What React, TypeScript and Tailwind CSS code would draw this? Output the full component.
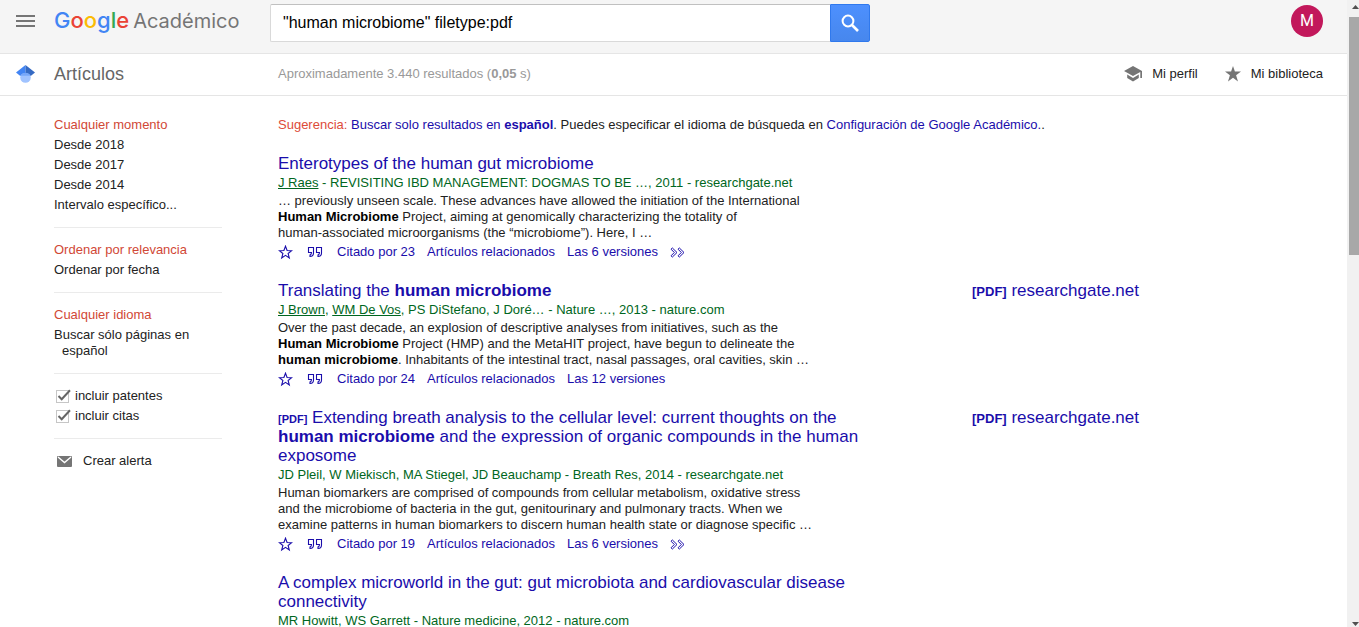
import type { ReactNode } from "react";

const link = "text-[#1a0dab] hover:underline";

type Result = {
  tag?: string;
  title: ReactNode;
  authors: ReactNode;
  snippet?: ReactNode;
  cited?: number;
  versions?: number;
  more?: boolean;
  pdf?: string;
};

const results: Result[] = [
  {
    title: "Enterotypes of the human gut microbiome",
    authors: (
      <>
        <a href="#" className="underline">J Raes</a> - REVISITING IBD MANAGEMENT: DOGMAS TO BE …, 2011 - researchgate.net
      </>
    ),
    snippet: (
      <>
        … previously unseen scale. These advances have allowed the initiation of the International
        <br />
        <b className="text-black">Human Microbiome</b> Project, aiming at genomically characterizing the totality of
        <br />
        human-associated microorganisms (the “microbiome”). Here, I …
      </>
    ),
    cited: 23,
    versions: 6,
    more: true,
  },
  {
    title: (
      <>
        Translating the <b>human microbiome</b>
      </>
    ),
    authors: (
      <>
        <a href="#" className="underline">J Brown</a>, <a href="#" className="underline">WM De Vos</a>, PS DiStefano, J Doré… - Nature …, 2013 - nature.com
      </>
    ),
    snippet: (
      <>
        Over the past decade, an explosion of descriptive analyses from initiatives, such as the
        <br />
        <b className="text-black">Human Microbiome</b> Project (HMP) and the MetaHIT project, have begun to delineate the
        <br />
        <b className="text-black">human microbiome</b>. Inhabitants of the intestinal tract, nasal passages, oral cavities, skin …
      </>
    ),
    cited: 24,
    versions: 12,
    pdf: "researchgate.net",
  },
  {
    tag: "[PDF]",
    title: (
      <>
        Extending breath analysis to the cellular level: current thoughts on the <b>human microbiome</b> and the
        expression of organic compounds in the human exposome
      </>
    ),
    authors: "JD Pleil, W Miekisch, MA Stiegel, JD Beauchamp - Breath Res, 2014 - researchgate.net",
    snippet: (
      <>
        Human biomarkers are comprised of compounds from cellular metabolism, oxidative stress
        <br />
        and the microbiome of bacteria in the gut, genitourinary and pulmonary tracts. When we
        <br />
        examine patterns in human biomarkers to discern human health state or diagnose specific …
      </>
    ),
    cited: 19,
    versions: 6,
    more: true,
    pdf: "researchgate.net",
  },
  {
    title: "A complex microworld in the gut: gut microbiota and cardiovascular disease connectivity",
    authors: "MR Howitt, WS Garrett - Nature medicine, 2012 - nature.com",
  },
];

function StarOutline() {
  return (
    <svg width="15" height="15" viewBox="0 0 15 15" fill="none" stroke="#1a0dab" strokeWidth="1.1">
      <path d="M7.5 1.2l1.6 4.3 4.5.2-3.5 2.8 1.2 4.4-3.8-2.5-3.8 2.5 1.2-4.4L1.4 5.7l4.5-.2z" />
    </svg>
  );
}

function QuoteIcon() {
  return (
    <svg width="16" height="12" viewBox="0 0 16 12" fill="none" stroke="#1a0dab" strokeWidth="1.1">
      <path d="M1.5 1.5h5V7c0 2-1.5 3.5-3.5 3.5V9c1-.3 1.500-1.200 1.500-2.500h-3zM9.500 1.500h5V7c0 2-1.500 3.500-3.500 3.500V9c1-.3 1.500-1.200 1.500-2.500h-3z" />
    </svg>
  );
}

function MoreIcon() {
  return (
    <svg width="15" height="11" viewBox="0 0 15 11" fill="none" stroke="#1a0dab" strokeWidth="1">
      <path d="M1 2.2L2.4 1 7 5.5 2.4 10 1 8.8l3.3-3.3zM8 2.2L9.4 1 14 5.5 9.4 10 8 8.8l3.3-3.3z" />
    </svg>
  );
}

function ResultItem({ r }: { r: Result }) {
  return (
    <article className="mb-5 flex items-start">
      <div className="w-[600px] shrink-0">
        <h3 className="text-[17px] leading-[19px]">
          {r.tag && (
            <>
              <span className="text-[11px] font-bold leading-none text-[#1a0dab]">{r.tag}</span>{" "}
            </>
          )}
          <a href="#" className={link}>{r.title}</a>
        </h3>
        <div className="mt-px leading-[18px] text-[#006621]">{r.authors}</div>
        {r.snippet && <p className="mt-px leading-4">{r.snippet}</p>}
        {r.cited && (
          <div className="mt-0.5 flex h-[18px] items-center leading-[18px] text-[#1a0dab]">
            <button type="button" aria-label="Guardar" className="mr-3.5"><StarOutline /></button>
            <button type="button" aria-label="Citar" className="mr-3.5"><QuoteIcon /></button>
            <a href="#" className="mr-3">Citado por {r.cited}</a>
            <a href="#" className="mr-3">Artículos relacionados</a>
            <a href="#" className="mr-3">Las {r.versions} versiones</a>
            {r.more && <button type="button" aria-label="Más"><MoreIcon /></button>}
          </div>
        )}
      </div>
      {r.pdf && (
        <a href="#" className={`${link} ml-[94px] whitespace-nowrap text-[17px] leading-[19px]`}>
          <span className="text-[13px] font-bold leading-none">[PDF]</span> {r.pdf}
        </a>
      )}
    </article>
  );
}

function Group({ children, last }: { children: ReactNode; last?: boolean }) {
  return <div className={last ? "" : "mb-3 border-b border-[#ebebeb] pb-3"}>{children}</div>;
}

function Item({ children, active }: { children: ReactNode; active?: boolean }) {
  return (
    <a href="#" className={`block py-0.5 pl-2 -indent-2 leading-4 ${active ? "text-[#d14836]" : "text-[#222]"}`}>
      {children}
    </a>
  );
}

function Check({ label }: { label: string }) {
  return (
    <label className="flex h-5 items-center gap-1 pl-0.5">
      <span className="relative size-[15px]">
        <input
          type="checkbox"
          defaultChecked
          className="peer absolute top-px left-0 size-[13px] appearance-none border border-[#c6c6c6] bg-white"
        />
        <svg className="pointer-events-none absolute inset-0 hidden peer-checked:block" width="15" height="15" viewBox="0 0 15 15" fill="none" stroke="#666" strokeWidth="2">
          <path d="M2.5 7l3.2 3.2L14 1.3" />
        </svg>
      </span>
      {label}
    </label>
  );
}

function Header() {
  return (
    <header className="flex h-[54px] border-b border-[#e5e5e5] bg-[#f5f5f5]">
      <div className="flex w-[270px] shrink-0 items-start pl-4">
        <button type="button" aria-label="Menú" className="mt-[15px] mr-[19px]">
          <svg width="19" height="12" viewBox="0 0 19 12" fill="#757575">
            <path d="M0 0h19v2H0zM0 5h19v2H0zM0 10h19v2H0z" />
          </svg>
        </button>
        <a href="#" className="flex items-baseline gap-1 whitespace-nowrap font-['Inter',sans-serif] leading-[40px]">
          <span className="text-[22px] font-medium">
            <span className="text-[#4285f4]">G</span>
            <span className="text-[#ea4335]">o</span>
            <span className="text-[#fbbc05]">o</span>
            <span className="text-[#4285f4]">g</span>
            <span className="text-[#34a853]">l</span>
            <span className="text-[#ea4335]">e</span>
          </span>
          <span className="text-xl leading-[40px] text-[#757575]">Académico</span>
        </a>
      </div>
      <form className="mt-1 flex h-[38px] w-[600px]" onSubmit={(e) => e.preventDefault()}>
        <input
          type="text"
          aria-label="Buscar"
          defaultValue={'"human microbiome" filetype:pdf'}
          className="min-w-0 flex-1 rounded-l-xs border border-r-0 border-[#d9d9d9] border-t-[#c0c0c0] bg-white px-3 text-base text-black outline-none"
        />
        <button
          type="submit"
          aria-label="Buscar"
          className="flex w-10 items-center justify-center rounded-r-xs border border-[#3079ed] bg-linear-to-b from-[#4d90fe] to-[#4787ed]"
        >
          <svg width="18" height="18" viewBox="0 0 18 18" fill="none" stroke="#fff">
            <circle cx="7" cy="7" r="5.4" strokeWidth="2" />
            <path d="M11 11l6 6" strokeWidth="2.6" />
          </svg>
        </button>
      </form>
      <button
        type="button"
        aria-label="Cuenta"
        className="mt-[5px] mr-6 ml-auto flex size-8 items-center justify-center rounded-full bg-[#c2185b] font-['Roboto',sans-serif] text-base text-white"
      >
        M
      </button>
    </header>
  );
}

function SubHeader() {
  return (
    <div className="flex h-[42px] items-center border-b border-[#e5e5e5] pr-6 pb-0.5">
      <div className="flex w-[278px] shrink-0 items-center pl-4">
        <svg width="19" height="18" viewBox="0 0 19 18" className="mr-[19px]">
          <circle cx="9.5" cy="12.5" r="5.3" fill="#a0c3ff" />
          <path d="M9.5 0L0 7.5l4.3 3.4a5.9 5.9 0 0 1 5.2-3z" fill="#4285f4" />
          <path d="M9.5 0L19 7.5l-4.3 3.4a5.9 5.9 0 0 0-5.2-3z" fill="#356ac3" />
          <path d="M4.4 10.8a5.9 5.9 0 0 1 10.2 0z" fill="#76a7fa" />
        </svg>
        <h1 className="text-lg leading-6 text-[#666]">Artículos</h1>
      </div>
      <div className="text-[#999]">
        Aproximadamente 3.440 resultados (<b>0,05</b> s)
      </div>
      <nav className="ml-auto flex items-center gap-[27px]">
        <a href="#" className="flex items-center gap-2.5">
          <svg width="18" height="16" viewBox="0 0 18 16" fill="#757575">
            <path d="M9 0L0 5l9 5 7.3-4.1V12H18V5z" />
            <path d="M3.2 8.6v3.3L9 15.4l5.8-3.5V8.6L9 11.9z" />
          </svg>
          Mi perfil
        </a>
        <a href="#" className="flex items-center gap-2.5">
          <svg width="16" height="16" viewBox="0 0 16 16" fill="#757575">
            <path d="M8 0l1.9 5.6H16l-4.9 3.7 1.9 6.1-5-3.7-5 3.7 1.9-6.1L0 5.6h6.1z" />
          </svg>
          Mi biblioteca
        </a>
      </nav>
    </div>
  );
}

function Scrollbar() {
  return (
    <div aria-hidden="true" className="flex w-3 shrink-0 flex-col items-end bg-[#f1f1f1]">
      <svg width="10" height="17" viewBox="0 0 10 17" fill="#505050">
        <path d="M3 9h7L6.5 5z" />
      </svg>
      <div className="h-[38%] w-2.5 bg-[#a8a8a8]" />
      <svg className="mt-auto" width="10" height="10" viewBox="0 0 10 10" fill="#505050">
        <path d="M3 5h7L6.5 9z" />
      </svg>
    </div>
  );
}

export default function App() {
  return (
    <div className="flex h-screen overflow-hidden bg-white font-['Liberation_Sans',Arial,sans-serif] text-[13px] text-[#222]">
      <div className="min-w-0 flex-1 overflow-hidden">
        <Header />
        <SubHeader />
        <div className="flex pt-[19px]">
          <aside className="mr-14 ml-[54px] w-[168px] shrink-0">
            <Group>
              <Item active>Cualquier momento</Item>
              <Item>Desde 2018</Item>
              <Item>Desde 2017</Item>
              <Item>Desde 2014</Item>
              <Item>Intervalo específico...</Item>
            </Group>
            <Group>
              <Item active>Ordenar por relevancia</Item>
              <Item>Ordenar por fecha</Item>
            </Group>
            <Group>
              <Item active>Cualquier idioma</Item>
              <Item>Buscar sólo páginas en español</Item>
            </Group>
            <Group>
              <Check label="incluir patentes" />
              <Check label="incluir citas" />
            </Group>
            <Group last>
              <a href="#" className="flex h-5 items-center gap-[11px] pl-[3px]">
                <svg width="15" height="11" viewBox="0 0 15 11">
                  <rect width="15" height="11" rx="1" fill="#757575" />
                  <path d="M1 1l6.5 5.5L14 1" fill="none" stroke="#fff" strokeWidth="1.4" />
                </svg>
                Crear alerta
              </a>
            </Group>
          </aside>
          <main className="min-w-0 flex-1">
            <p className="mb-[19px] leading-5">
              <span className="text-[#dd4b39]">Sugerencia:</span>{" "}
              <a href="#" className={link}>Buscar solo resultados en <b>español</b></a>. Puedes especificar el idioma de
              búsqueda en <a href="#" className={link}>Configuración de Google Académico.</a>.
            </p>
            {results.map((r, i) => (
              <ResultItem key={i} r={r} />
            ))}
          </main>
        </div>
      </div>
      <Scrollbar />
    </div>
  );
}
